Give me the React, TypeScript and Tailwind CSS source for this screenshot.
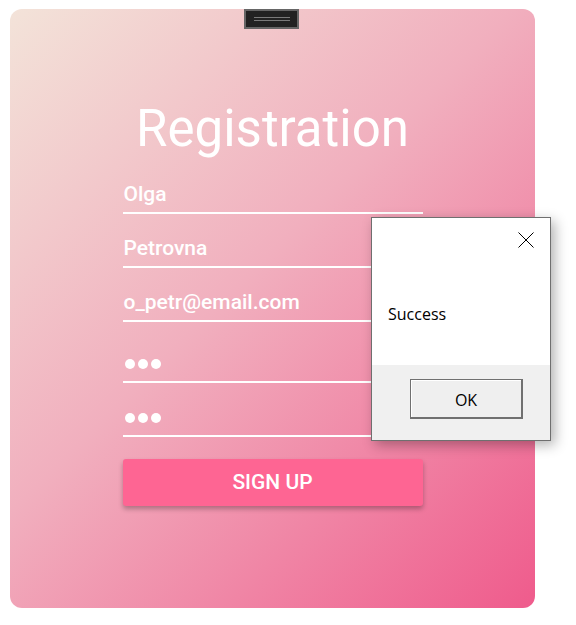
import { useState } from "react";

const fieldText =
  "flex items-center h-[24px] pl-[1px] text-[21px] leading-[24px] font-medium text-white";

function Field({ value, className = "" }: { value: string; className?: string }) {
  return (
    <div className={`pb-[6px] border-b-2 border-white ${className}`}>
      <div className={fieldText}>{value}</div>
    </div>
  );
}

function PasswordField({ className = "" }: { className?: string }) {
  return (
    <div className={`pb-[6px] border-b-2 border-white ${className}`}>
      <div className="flex items-center h-[24px] gap-[3px] pl-[2px] pt-[2px]">
        <span className="w-[10px] h-[10px] rounded-full bg-white" />
        <span className="w-[10px] h-[10px] rounded-full bg-white" />
        <span className="w-[10px] h-[10px] rounded-full bg-white" />
      </div>
    </div>
  );
}

export default function App() {
  const [open, setOpen] = useState(true);

  return (
    <div className="relative w-[576px] h-[625px] bg-white pt-[9px] pl-[10px] font-['Roboto',sans-serif]">
      {/* card */}
      <div className="relative w-[525px] h-[599px] rounded-[12px] bg-[linear-gradient(135deg,#f3e3d9_0%,#f1afbe_45%,#ef5b8c_100%)] flex flex-col items-center pt-[92px]">
        {/* drag handle */}
        <div className="absolute top-0 left-[234px] w-[55px] h-[20px] bg-[#222] border-2 border-[#666] flex items-center justify-center">
          <div className="w-[36px] h-[4px] border-y border-[#7a7a7a]" />
        </div>

        <h1 className="text-[51px] leading-[56px] font-normal text-white">Registration</h1>

        <div className="w-[300px] mt-[25px] flex flex-col">
          <Field value="Olga" />
          <Field value="Petrovna" className="mt-[22px]" />
          <Field value="o_petr@email.com" className="mt-[22px]" />
          <PasswordField className="mt-[29px]" />
          <PasswordField className="mt-[22px]" />
          <button className="mt-[22px] h-[47px] rounded-[3px] bg-[#fe6593] text-white text-[21px] font-medium shadow-[0_3px_5px_rgba(0,0,0,0.28)]">
            SIGN UP
          </button>
        </div>
      </div>

      {/* message box */}
      {open && (
        <div className="absolute left-[371px] top-[217px] w-[180px] h-[224px] border border-[#6f6f6f] bg-white flex flex-col font-['Open_Sans',sans-serif] shadow-[4px_4px_12px_rgba(0,0,0,0.3)]">
          <div className="relative h-[147px]">
            <button
              onClick={() => setOpen(false)}
              className="absolute left-[146px] top-[14px] w-[16px] h-[16px]"
            >
              <svg width="16" height="16" viewBox="0 0 16 16">
                <path d="M0.5 0.5L15.5 15.5M15.5 0.5L0.5 15.5" stroke="#000" strokeWidth="1" />
              </svg>
            </button>
            <div className="absolute left-[16px] top-[85px] text-[16px] leading-[22px] text-black">Success</div>
          </div>
          <div className="flex-1 bg-[#f0f0f0] pl-[38px] pt-[14px]">
            <button
              onClick={() => setOpen(false)}
              className="w-[113px] h-[40px] pt-[2px] border border-[#707070] border-r-2 border-b-2 bg-[#efefef] shadow-[inset_1px_1px_0_#ffffff] text-[16px] text-black"
            >
              OK
            </button>
          </div>
        </div>
      )}
    </div>
  );
}
